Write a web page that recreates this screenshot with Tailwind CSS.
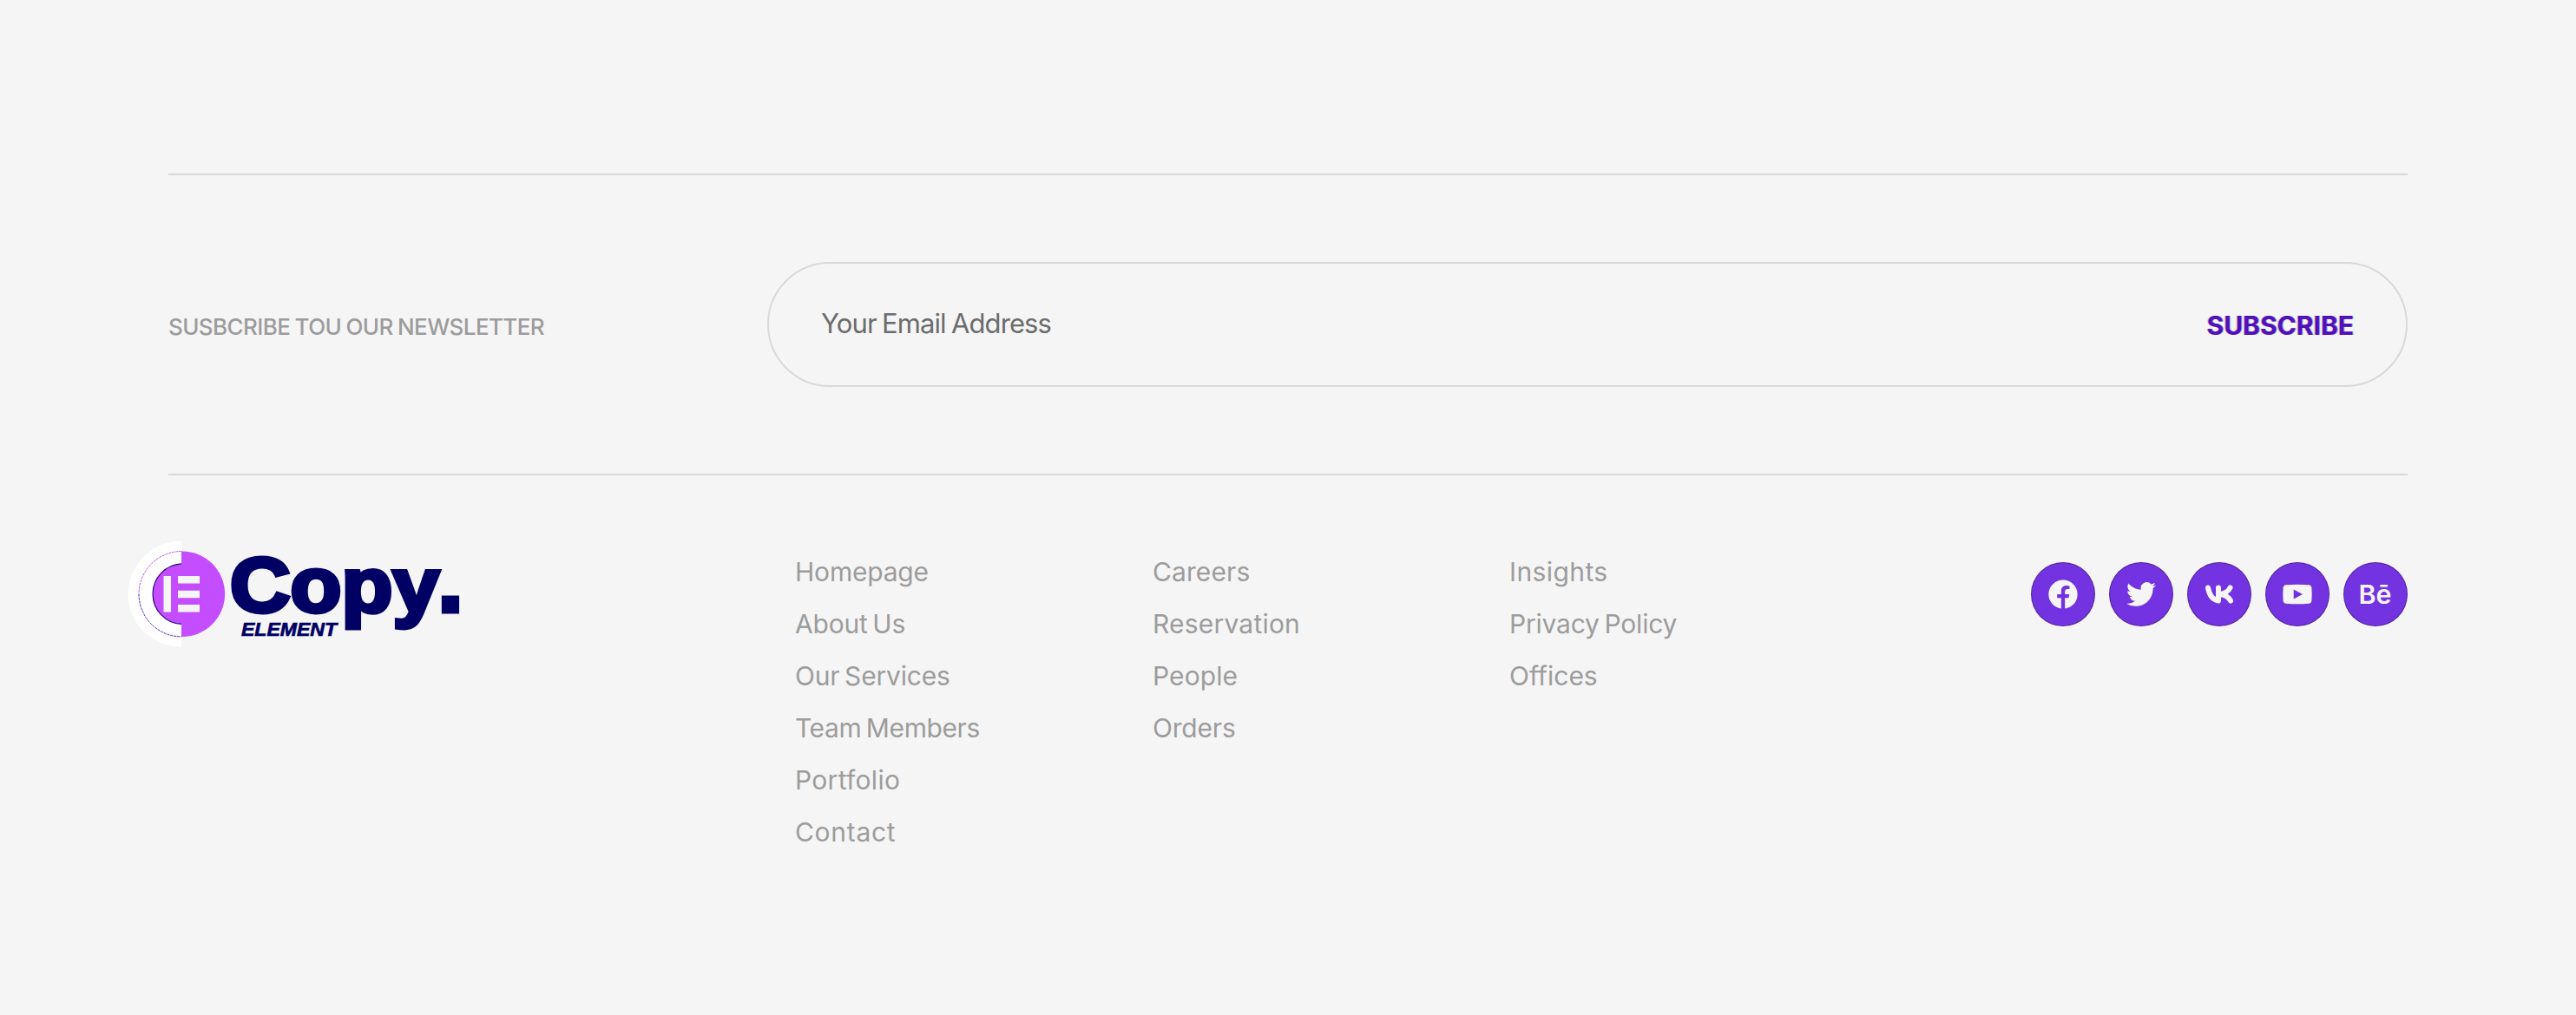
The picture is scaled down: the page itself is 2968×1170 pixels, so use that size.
<!DOCTYPE html>
<html lang="en">
<head>
    <meta charset="UTF-8">
    <title>Footer</title>
    <script src="https://cdn.jsdelivr.net/npm/@tailwindcss/browser@4"></script>
</head>
<body class="bg-[#f5f5f5] font-['Inter',sans-serif]">
<footer class="min-h-[1170px] px-[194px] pt-[200px] text-[#9c9c9c]">

    <!-- Newsletter -->
    <div class="flex items-center border-y-2 border-[#d9d9d9] h-[348px]">
        <h6 class="w-[690px] pt-1 text-[26px] font-medium tracking-[-0.6px] [word-spacing:-1px] whitespace-nowrap">SUSBCRIBE TOU OUR NEWSLETTER</h6>
        <form class="flex flex-1 h-36 items-center justify-between rounded-full border-2 border-[#d9d9d9] px-[60px]">
            <input type="text" placeholder="Your Email Address" class="w-[600px] pb-0.5 text-[31px] tracking-[-0.9px] [word-spacing:-1.5px] placeholder:text-[#6c6c6c] outline-none">
            <button type="button" class="pt-0.5 text-[30px] font-bold text-[#5210b8] [text-shadow:-1px_0_#b0642f66,1px_0_#3a5cff88]">SUBSCRIBE</button>
        </form>
    </div>

    <div class="flex items-start">
        <!-- Logo -->
        <svg class="-ml-[54px] mt-[62px] h-[150px] w-[400px] shrink-0 overflow-visible" viewBox="140 610 400 150">
            <path d="M209 623.5a61 61 0 0 0 0 122.5z" fill="#fff" />
            <circle cx="209.8" cy="684.7" r="49.3" fill="#c44dff" />
            <path d="M209 635.5a49.2 49.2 0 0 0 0 98.4v-14.5a34.8 34.8 0 0 1 0-69.5z" fill="#fff" />
            <path d="M209 635.5a49.2 49.2 0 0 0 -49 49.2" fill="none" stroke="#b45cf0" stroke-width="1" stroke-dasharray="3 1" />
            <path d="M160 684.7a49.2 49.2 0 0 0 49 49.2" fill="none" stroke="#5a20b0" stroke-width="1" stroke-dasharray="3 1" />
            <path d="M209 649.9a34.8 34.8 0 0 0 0 69.5" fill="none" stroke="#2a0880" stroke-width="1.2" />
            <path d="M188.5 664h8.5v41.5h-8.5zM205 664h25v8.5h-25zM205 680.7h25v8.5h-25zM205 697h25v8.5h-25z" fill="#f5f5f5" />
            <g class="font-['Liberation_Sans',sans-serif]" font-weight="700" fill="#000064" stroke="#000064">
                <text x="265" y="705" textLength="241" lengthAdjust="spacingAndGlyphs" font-size="89" stroke-width="4.8">Copy</text>
                <text x="504" y="704.5" font-size="108" stroke-width="5">.</text>
                <text x="278" y="732.5" textLength="110" lengthAdjust="spacingAndGlyphs" font-size="22.5" font-style="italic" stroke-width="0.7">ELEMENT</text>
            </g>
        </svg>

        <!-- Links -->
        <nav class="ml-[376px] mt-[81px] flex text-[30px] leading-[60px] tracking-[-0.2px] [word-spacing:-2.5px]">
            <ul class="w-[412px]">
                <li>Homepage</li>
                <li>About Us</li>
                <li>Our Services</li>
                <li class="tracking-[-0.4px]">Team Members</li>
                <li class="tracking-[0.3px]">Portfolio</li>
                <li class="tracking-[0.7px]">Contact</li>
            </ul>
            <ul class="w-[411px]">
                <li class="tracking-[0.1px]">Careers</li>
                <li class="tracking-[0.2px]">Reservation</li>
                <li class="tracking-[0.1px]">People</li>
                <li>Orders</li>
            </ul>
            <ul>
                <li class="tracking-[0.4px]">Insights</li>
                <li>Privacy Policy</li>
                <li class="tracking-normal">Offices</li>
            </ul>
        </nav>

        <!-- Social -->
        <div class="ml-auto mt-[100px] flex gap-4 text-[#f5f5f5]">
            <a class="flex size-[74px] items-center justify-center rounded-full border border-black/30 bg-[#7433e0]">
                <svg class="size-10" viewBox="0 0 24 24" fill="currentColor"><path d="M12 2.04C6.5 2.04 2 6.53 2 12.06C2 17.06 5.66 21.21 10.7 21.96V14.5H7.9V12.06H10.7V9.85C10.7 7.34 11.93 5.96 14.22 5.96C15.31 5.96 16.45 6.15 16.45 6.15V8.4H15.19C13.95 8.4 13.3 9.1 13.3 10.18V12.06H16.34L15.89 14.5H13.3V21.96A10 10 0 0 0 22 12.06C22 6.53 17.5 2.04 12 2.04Z" /></svg>
            </a>
            <a class="flex size-[74px] items-center justify-center rounded-full border border-black/30 bg-[#7433e0]">
                <svg class="size-[34px]" viewBox="0 0 24 24" fill="currentColor"><path d="M23.953 4.57a10 10 0 01-2.825.775 4.958 4.958 0 002.163-2.723c-.951.555-2.005.959-3.127 1.184a4.92 4.92 0 00-8.384 4.482C7.69 8.095 4.067 6.13 1.64 3.162a4.822 4.822 0 00-.666 2.475c0 1.71.87 3.213 2.188 4.096a4.904 4.904 0 01-2.228-.616v.06a4.923 4.923 0 003.946 4.827 4.996 4.996 0 01-2.212.085 4.936 4.936 0 004.604 3.417 9.867 9.867 0 01-6.102 2.105c-.39 0-.779-.023-1.17-.067a13.995 13.995 0 007.557 2.209c9.053 0 13.998-7.496 13.998-13.985 0-.21 0-.42-.015-.63A9.935 9.935 0 0024 4.59z" /></svg>
            </a>
            <a class="flex size-[74px] items-center justify-center rounded-full border border-black/30 bg-[#7433e0]">
                <svg class="h-[22px] w-8" viewBox="0 0 32 22" fill="none" stroke="currentColor" stroke-width="6" stroke-linecap="round" stroke-linejoin="round"><path d="M3 3.5C4.5 12 9 17.5 15 18.5V3.5M28.5 3.5C26.5 7.5 22 10.5 16 11C22 11.5 27 14.5 29 18.5" /></svg>
            </a>
            <a class="flex size-[74px] items-center justify-center rounded-full border border-black/30 bg-[#7433e0]">
                <svg class="h-6 w-[34px]" viewBox="0 0 34 24" fill="currentColor" fill-rule="evenodd"><path d="M4 1.2Q17 .2 30 1.2Q33 1.5 33.4 4.5Q34 12 33.4 19.5Q33 22.5 30 22.8Q17 23.8 4 22.8Q1 22.5 .6 19.5Q0 12 .6 4.5Q1 1.5 4 1.2zM12.7 6.5v11l10.3-5.5z" /></svg>
            </a>
            <a class="flex size-[74px] items-center justify-center rounded-full border border-black/30 bg-[#7433e0]">
                <svg class="h-6 w-9 overflow-visible" viewBox="0 0 36 24" fill="currentColor"><text x="-1.5" y="22.5" textLength="38" lengthAdjust="spacingAndGlyphs" font-size="30" font-weight="600">Bē</text></svg>
            </a>
        </div>
    </div>
</footer>
</body>
</html>
